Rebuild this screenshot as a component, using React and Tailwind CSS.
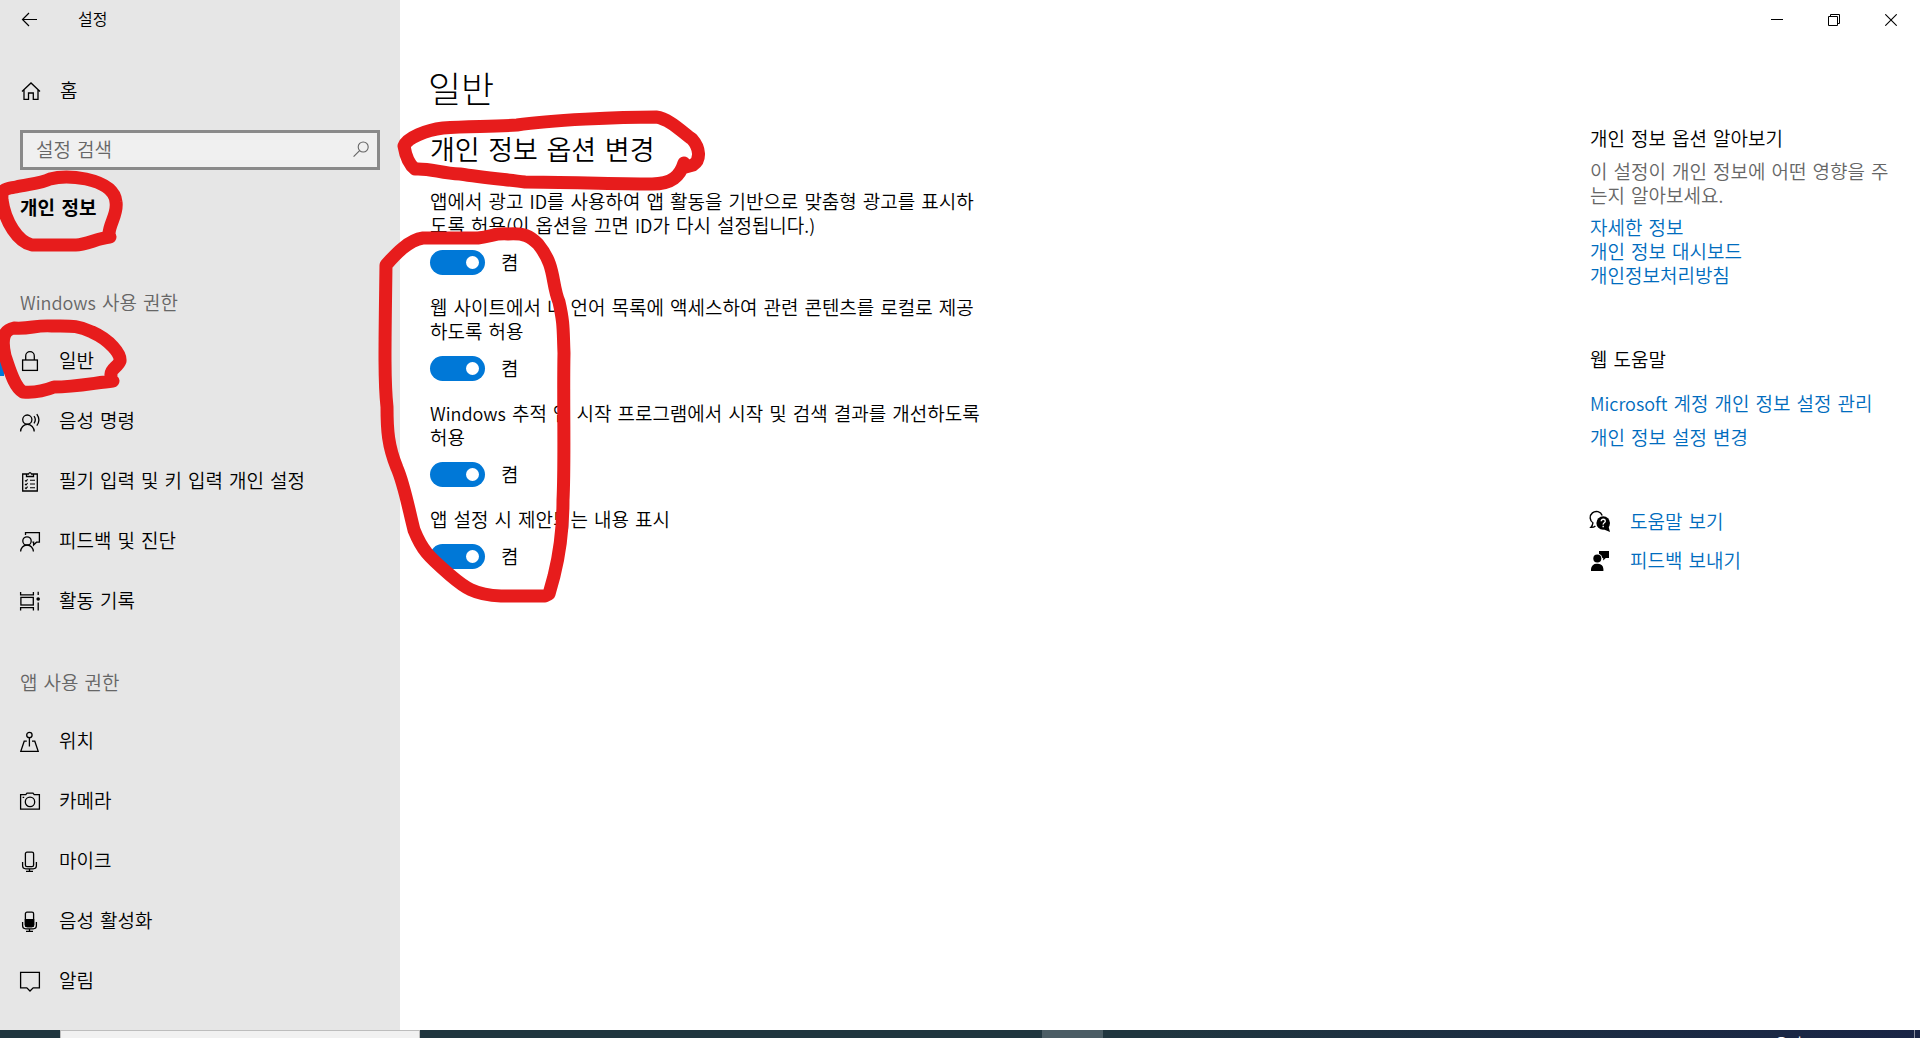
import { useState } from "react";

const stroke = {
  fill: "none",
  stroke: "currentColor",
  strokeWidth: 1.3,
};

function Icon({ children, className = "" }) {
  return (
    <svg
      width="20"
      height="20"
      viewBox="0 0 20 20"
      className={`shrink-0 overflow-visible ${className}`}
      aria-hidden="true"
      {...stroke}
    >
      {children}
    </svg>
  );
}

const BackIcon = () => (
  <Icon>
    <path d="M17 9.5H2.5M9 3L2.5 9.5L9 16" strokeWidth="1.2" />
  </Icon>
);

const HomeIcon = () => (
  <Icon>
    <path d="M2 10.5L11 2L20 10.5M4 9V18.3H8.5V12H13.3V18.3H18V9" />
  </Icon>
);

const SearchIcon = () => (
  <Icon>
    <circle cx="12.2" cy="7" r="5" strokeWidth="1.1" />
    <path d="M8.6 10.7L2.6 16.6" strokeWidth="1.1" />
  </Icon>
);

const LockIcon = () => (
  <Icon>
    <rect x="2.6" y="9" width="14.8" height="10.4" />
    <path d="M5.7 9V5a4.3 4.3 0 0 1 8.6 0V9" />
  </Icon>
);

const SpeechIcon = () => (
  <Icon>
    <circle cx="7.3" cy="8.6" r="4.6" />
    <path d="M.6 20.6a6.8 7.2 0 0 1 13.6 0" />
    <path d="M14 5.2q2.6 3.6 0 7.2M16.8 3.2q4.2 5.8 0 11.4" />
  </Icon>
);

const ClipboardIcon = () => (
  <Icon>
    <path d="M6.5 3H2.7V20H17.3V3H13.5M6.5 5.5V3H8.5Q10 .2 11.5 3H13.5V5.5Z" />
    <path d="M5 9.3l1 1 1.6-2M5 13l1 1 1.6-2M5 16.7l1 1 1.6-2M10 9.3h5M10 13h5M10 16.7h5" strokeWidth="1.1" />
  </Icon>
);

const FeedbackIcon = () => (
  <Icon>
    <circle cx="7" cy="10" r="4.2" />
    <path d="M.6 20.6a6.4 6.6 0 0 1 12.8 0" />
    <path d="M5.5 4V1.6H19.4V11.2H16.5L13.6 14V11.2H12.4" />
  </Icon>
);

const ActivityIcon = () => (
  <Icon>
    <path d="M.6 1V3.8H13.4V1M.6 19.6V16.6H13.4V19.6" />
    <rect x=".9" y="6.4" width="12.4" height="7.6" />
    <path d="M18.2 .8V4M18.2 11.4V19.6" />
    <circle cx="18.2" cy="8" r="1.8" fill="currentColor" stroke="none" />
  </Icon>
);

const LocationIcon = () => (
  <Icon>
    <circle cx="9.4" cy="4" r="2.7" />
    <path d="M9.4 6.7V15.6M6.8 10.2H4.2L.8 20.3H18.2L14.8 10.2H12" />
  </Icon>
);

const CameraIcon = () => (
  <Icon>
    <path d="M.6 3.6H5.8L7 2.2H13L14.2 3.6H19.4V18.2H.6Z" />
    <circle cx="10" cy="10.9" r="4.7" />
    <path d="M2.6 6.4h1.6" />
  </Icon>
);

const MicIcon = () => (
  <Icon>
    <rect x="5.4" y="1.2" width="8.2" height="14.4" rx="1.6" />
    <path d="M2.6 11V14.6Q2.6 17.8 5.8 17.8H13.2Q16.4 17.8 16.4 14.6V11M9.5 17.8V20.2M6 20.4H13" />
  </Icon>
);

const VoiceIcon = () => (
  <Icon>
    <rect x="5.4" y="1.2" width="8.2" height="14.4" rx="1.6" />
    <path d="M5.4 8.6H13.6V14a1.6 1.6 0 0 1-1.6 1.6H7a1.6 1.6 0 0 1-1.6-1.6Z" fill="currentColor" />
    <path d="M2.6 11V14.6Q2.6 17.8 5.8 17.8H13.2Q16.4 17.8 16.4 14.6V11M9.5 17.8V20.2M6 20.4H13" />
  </Icon>
);

const NotificationIcon = () => (
  <Icon>
    <path d="M.6 1.4H19.4V16.8H13.2L10 20L6.8 16.8H.6Z" />
  </Icon>
);

const HelpIcon = () => (
  <Icon>
    <path d="M3 10.6Q2.6 13.6 .8 15.4Q3.6 15.6 5.4 14M3.2 11A6.2 6.2 0 1 1 12.2 3.6" strokeWidth="1.4" />
    <circle cx="13.2" cy="11" r="6.8" fill="currentColor" stroke="none" />
    <path d="M14 17.4L20 20L18.4 14Z" fill="currentColor" stroke="none" />
    <path d="M11.2 9.2Q11.4 7.2 13.3 7.2T15.3 9Q15.3 10 14.2 10.8T13.2 12.6M13.2 13.8V15.2" stroke="white" strokeWidth="1.4" />
  </Icon>
);

const SendFeedbackIcon = () => (
  <Icon>
    <g fill="currentColor" stroke="none">
      <circle cx="7.3" cy="7.6" r="4" />
      <path d="M1 20V18a5.6 5.6 0 0 1 5.6-5.2H8a5.6 5.6 0 0 1 5.4 5.2V20Z" />
      <path d="M9 0H19V7H15.8L13.2 9.6V7H12.4A5.4 5.4 0 0 0 9 2.8Z" />
    </g>
  </Icon>
);

const Latin = ({ children }) => (
  <span className="font-['Noto_Sans_CJK_KR',sans-serif] text-[18px] leading-none">{children}</span>
);

const windowsItems = [
  { label: "일반", icon: LockIcon, active: true },
  { label: "음성 명령", icon: SpeechIcon },
  { label: "필기 입력 및 키 입력 개인 설정", icon: ClipboardIcon },
  { label: "피드백 및 진단", icon: FeedbackIcon },
  { label: "활동 기록", icon: ActivityIcon },
];

const appItems = [
  { label: "위치", icon: LocationIcon },
  { label: "카메라", icon: CameraIcon },
  { label: "마이크", icon: MicIcon },
  { label: "음성 활성화", icon: VoiceIcon },
  { label: "알림", icon: NotificationIcon },
];

const options = [
  {
    id: "ad-id",
    text: (
      <>
        앱에서 광고 <Latin>ID</Latin>를 사용하여 앱 활동을 기반으로 맞춤형 광고를 표시하도록 허용
        <Latin>(</Latin>이 옵션을 끄면 <Latin>ID</Latin>가 다시 설정됩니다<Latin>.)</Latin>
      </>
    ),
  },
  {
    id: "language",
    text: "웹 사이트에서 내 언어 목록에 액세스하여 관련 콘텐츠를 로컬로 제공하도록 허용",
  },
  {
    id: "tracking",
    text: (
      <>
        <Latin>Windows</Latin> 추적 앱 시작 프로그램에서 시작 및 검색 결과를 개선하도록 허용
      </>
    ),
  },
  { id: "suggestions", text: "앱 설정 시 제안되는 내용 표시" },
];

function NavList({ items }) {
  return (
    <ul className="mt-4">
      {items.map(({ label, icon: ItemIcon, active }) => (
        <li key={label}>
          <a href="#" className="relative flex h-[60px] items-center gap-[19px] pl-5">
            {active && <span className="absolute left-0 h-[30px] w-1 bg-[#0078d7]" />}
            <ItemIcon />
            <span>{label}</span>
          </a>
        </li>
      ))}
    </ul>
  );
}

function ToggleOption({ id, text }) {
  const [on, setOn] = useState(true);

  return (
    <div>
      <label htmlFor={id} className="block">
        {text}
      </label>
      <div className="mt-3 flex h-[25px] items-center gap-4">
        <input
          id={id}
          type="checkbox"
          role="switch"
          checked={on}
          onChange={(e) => setOn(e.target.checked)}
          className="flex h-[25px] w-[55px] appearance-none items-center rounded-full bg-[#767676] px-1.5 before:size-[13px] before:rounded-full before:bg-white checked:justify-end checked:bg-[#0078d7]"
        />
        <span>{on ? "켬" : "끔"}</span>
      </div>
    </div>
  );
}

function Sidebar() {
  return (
    <aside className="w-[400px] shrink-0 bg-[#e6e6e6]">
      <header className="flex h-10 items-center gap-[38px] pl-5 text-[16px]">
        <button type="button" aria-label="뒤로">
          <BackIcon />
        </button>
        <span>설정</span>
      </header>
      <a href="#" className="mt-[31px] flex h-10 items-center gap-5 pl-5">
        <HomeIcon />
        <span>홈</span>
      </a>
      <div className="mx-5 mt-[19px] flex h-10 items-center border-3 border-[#8a8a8a] bg-[#f0f0f0] pr-1.5 pl-[13px] text-[#666]">
        <input
          type="text"
          aria-label="설정 검색"
          placeholder="설정 검색"
          className="min-w-0 flex-1 bg-transparent outline-none placeholder:text-[#666]"
        />
        <SearchIcon />
      </div>
      <h2 className="mt-[26px] pl-5 font-bold">개인 정보</h2>
      <h3 className="mt-[71px] pl-5 text-[#666]">
        <Latin>Windows</Latin> 사용 권한
      </h3>
      <NavList items={windowsItems} />
      <h3 className="mt-10 pl-5 text-[#666]">앱 사용 권한</h3>
      <NavList items={appItems} />
    </aside>
  );
}

function WindowButtons() {
  const button = "flex h-10 w-[57px] items-center justify-center";

  return (
    <div className="flex justify-end pr-px">
      <button type="button" aria-label="최소화" className={button}>
        <svg width="12" height="12" viewBox="0 0 12 12" {...stroke} strokeWidth="1">
          <path d="M0 5.5H12" />
        </svg>
      </button>
      <button type="button" aria-label="이전 크기로 복원" className={button}>
        <svg width="12" height="12" viewBox="0 0 12 12" {...stroke} strokeWidth="1">
          <path d="M.5 2.5H9.5V11.5H.5ZM2.5 2.5V.5H11.5V9.5H9.5" />
        </svg>
      </button>
      <button type="button" aria-label="닫기" className={button}>
        <svg width="12" height="12" viewBox="0 0 12 12" {...stroke} strokeWidth="1.1">
          <path d="M.3 .3L11.7 11.7M11.7 .3L.3 11.7" />
        </svg>
      </button>
    </div>
  );
}

function RelatedLinks() {
  return (
    <aside className="mt-[87px] mr-[25px] w-[305px] shrink-0">
      <h3>개인 정보 옵션 알아보기</h3>
      <p className="mt-[9px] text-[#666]">
        이 설정이 개인 정보에 어떤 영향을 주는지 알아보세요<Latin>.</Latin>
      </p>
      <ul className="mt-2 text-[#006cbe]">
        <li><a href="#">자세한 정보</a></li>
        <li><a href="#">개인 정보 대시보드</a></li>
        <li><a href="#">개인정보처리방침</a></li>
      </ul>
      <h3 className="mt-[60px]">웹 도움말</h3>
      <ul className="mt-5 flex flex-col gap-2.5 text-[#006cbe]">
        <li><a href="#"><Latin>Microsoft</Latin> 계정 개인 정보 설정 관리</a></li>
        <li><a href="#">개인 정보 설정 변경</a></li>
      </ul>
      <ul className="mt-[60px] flex flex-col gap-[15px]">
        <li>
          <a href="#" className="flex items-center gap-5">
            <HelpIcon />
            <span className="text-[#006cbe]">도움말 보기</span>
          </a>
        </li>
        <li>
          <a href="#" className="flex items-center gap-5">
            <SendFeedbackIcon />
            <span className="text-[#006cbe]">피드백 보내기</span>
          </a>
        </li>
      </ul>
    </aside>
  );
}

// Hand-drawn marker circles on top of the window
function MarkerStrokes() {
  return (
    <svg
      width="720"
      height="620"
      viewBox="0 0 720 620"
      className="pointer-events-none absolute top-0 left-0"
      fill="none"
      stroke="#e71c1c"
      strokeWidth="13"
      strokeLinecap="round"
      strokeLinejoin="round"
      aria-hidden="true"
    >
      <path d="M110 237C98 238 86 245 76 245H32C18 242 5 222 2 200C1 188 6 189 16 187C30 184 42 183 50 179C64 175 76 177 86 179C104 183 115 190 116 202C118 214 109 224 109 234" />
      <path d="M113 381C94 383 74 387 54 387C44 391 34 393 23 392C14 387 10 370 5 356C1 338 4 330 14 328C32 329 34 325 52 326C70 326 78 325 92 332C110 340 121 354 120 361C118 367 110 369 111 375" />
      <path d="M684 163C680 176 672 184 652 184C610 184 566 182 525 182C500 179 480 177 460 174C440 173 430 168 415 169C407 163 405 152 404 146C407 138 426 130 443 128C470 126 490 127 517 125C550 120 620 117 656 117C670 119 682 132 692 139C700 148 701 160 693 165L682 168" />
      <path d="M549 594L545 596H501C474 595 464 587 450 575C428 556 422 550 414 530C408 506 404 484 397 468C388 446 387 430 387 407C384 380 385 340 386 265C394 256 408 240 423 238H478C494 236 494 233 508 234C524 233 530 236 538 244C556 266 551 282 559 302C564 324 563 330 564 353C563 400 565 460 563 500C563 530 558 560 554 576Z" />
    </svg>
  );
}

function Taskbar() {
  return (
    <footer className="flex h-2 overflow-hidden bg-linear-to-r from-[#20363f] from-60% to-[#192445] text-white">
      <div className="ml-[60px] w-[360px] border border-b-0 border-[#bdbdbd] bg-[#f1f1f1]" />
      <div className="ml-[622px] w-[61px] bg-[#4b5d65]" />
      <span className="mt-0.5 mr-[112px] ml-auto text-[15px]">오전</span>
      <div className="mr-[5px] w-px bg-[#8a90a0]" />
    </footer>
  );
}

export default function App() {
  return (
    <div className="relative flex min-h-screen flex-col overflow-hidden bg-white font-['DejaVu_Sans','Noto_Sans_CJK_KR',sans-serif] text-[19px] leading-6 font-[350] text-black">
      <div className="flex flex-1">
        <Sidebar />
        <div className="flex flex-1 flex-col">
          <WindowButtons />
          <div className="flex justify-between">
            <main className="w-[582px] pt-[27px] pl-[30px]">
              <h1 className="-ml-0.5 text-[36px] leading-[48px] font-light">일반</h1>
              <h2 className="mt-[18px] text-[27px] leading-9">개인 정보 옵션 변경</h2>
              <div className="mt-[21px] flex flex-col gap-[21px]">
                {options.map((option) => (
                  <ToggleOption key={option.id} {...option} />
                ))}
              </div>
            </main>
            <RelatedLinks />
          </div>
        </div>
      </div>
      <Taskbar />
      <MarkerStrokes />
    </div>
  );
}
